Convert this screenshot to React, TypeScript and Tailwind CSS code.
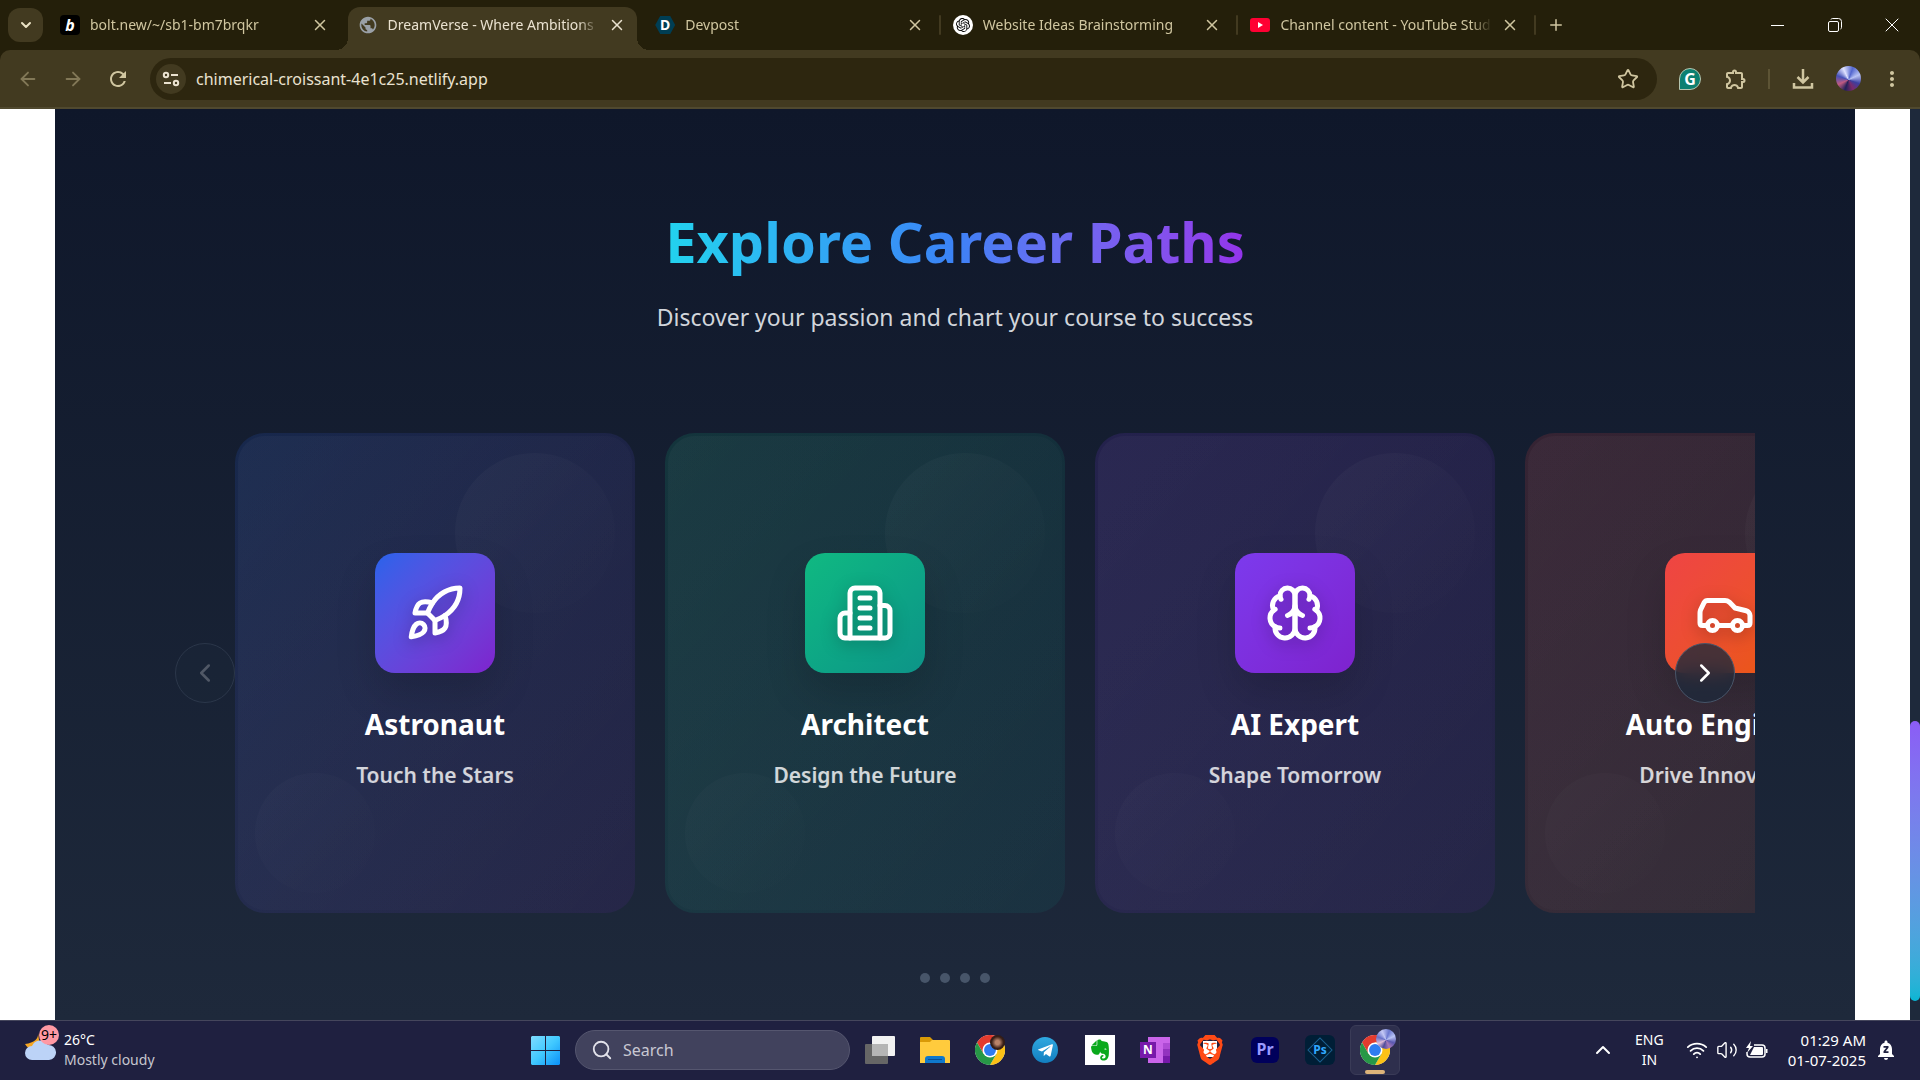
import React, { useState } from 'react';
import {
  ArrowLeft,
  ArrowRight,
  Car,
  ChevronDown,
  ChevronLeft,
  ChevronRight,
  ChevronUp,
  Plus,
  Rocket,
  Search,
  Star,
  Volume2,
  Wifi,
  X,
} from 'lucide-react';
import { FaTelegramPlane, FaEvernote } from 'react-icons/fa';
import { SiOpenai, SiBrave } from 'react-icons/si';
import { MdNotificationsPaused, MdMoreVert, MdOutlineExtension, MdRefresh, MdPublic } from 'react-icons/md';

type IconProps = { className?: string };

function BuildingIcon({ className }: IconProps) {
  return (
    <svg viewBox="0 0 24 24" fill="none" stroke="currentColor" strokeWidth="2" strokeLinecap="round" strokeLinejoin="round" className={className}>
      <path d="M6 22V4a2 2 0 0 1 2-2h8a2 2 0 0 1 2 2v18Z" />
      <path d="M6 12H4a2 2 0 0 0-2 2v6a2 2 0 0 0 2 2h2" />
      <path d="M18 9h2a2 2 0 0 1 2 2v9a2 2 0 0 1-2 2h-2" />
      <path d="M10 6h4M10 10h4M10 14h4M10 18h4" />
    </svg>
  );
}

function BrainIcon({ className }: IconProps) {
  return (
    <svg viewBox="0 0 24 24" fill="none" stroke="currentColor" strokeWidth="2" strokeLinecap="round" strokeLinejoin="round" className={className}>
      <path d="M12 5a3 3 0 1 0-5.997.125 4 4 0 0 0-2.526 5.77 4 4 0 0 0 .556 6.588A4 4 0 1 0 12 18Z" />
      <path d="M12 5a3 3 0 1 1 5.997.125 4 4 0 0 1 2.526 5.77 4 4 0 0 1-.556 6.588A4 4 0 1 1 12 18Z" />
      <path d="M15 13a4.5 4.5 0 0 1-3-4 4.5 4.5 0 0 1-3 4" />
      <path d="M17.599 6.5a3 3 0 0 0 .399-1.375M6.003 5.125A3 3 0 0 0 6.401 6.5" />
      <path d="M3.477 10.896a4 4 0 0 1 .585-.396M19.938 10.5a4 4 0 0 1 .585.396" />
      <path d="M6 18a4 4 0 0 1-1.967-.516M19.967 17.484A4 4 0 0 1 18 18" />
    </svg>
  );
}

function ChromeLogo() {
  return (
    <svg viewBox="0 0 48 48" className="w-[30px] h-[30px]">
      <circle cx="24" cy="24" r="24" fill="#fff" />
      <path d="M24 12h20.8A24 24 0 0 0 3.2 12l10.4 18z" fill="#e33b2e" />
      <path d="M34.4 30 24 48a24 24 0 0 0 20.8-36H24z" fill="#fbc116" />
      <path d="M13.6 30 3.2 12A24 24 0 0 0 24 48l10.4-18z" fill="#279847" />
      <circle cx="24" cy="24" r="12" fill="#fff" />
      <circle cx="24" cy="24" r="9.5" fill="#2f7cf0" />
    </svg>
  );
}

const tabs = [
  {
    title: 'bolt.new/~/sb1-bm7brqkr',
    icon: <span className="w-5 h-5 rounded bg-black text-white text-base leading-5 font-bold italic text-center">b</span>,
  },
  {
    title: 'DreamVerse - Where Ambitions',
    active: true,
    icon: <MdPublic className="w-5 h-5 text-[#9aa0a6]" />,
  },
  {
    title: 'Devpost',
    icon: (
      <span className="w-5 h-5 bg-[#003e54] text-white text-sm leading-5 font-bold text-center [clip-path:polygon(25%_5%,75%_5%,100%_50%,75%_95%,25%_95%,0_50%)]">
        D
      </span>
    ),
  },
  {
    title: 'Website Ideas Brainstorming',
    icon: (
      <span className="w-5 h-5 rounded-full bg-white flex items-center justify-center">
        <SiOpenai className="w-[14px] h-[14px] text-black" />
      </span>
    ),
  },
  {
    title: 'Channel content - YouTube Stud',
    icon: (
      <svg viewBox="0 0 20 14" className="w-5 h-[14px]">
        <rect width="20" height="14" rx="3" fill="#ff0033" />
        <path d="M8 4v6l5-3z" fill="#fff" />
      </svg>
    ),
  },
];

const careers = [
  {
    icon: Rocket,
    title: 'Astronaut',
    description: 'Touch the Stars',
    card: 'from-[#2563eb]/15 to-[#7e22ce]/10',
    tile: 'from-[#2563eb] to-[#7e22ce]',
  },
  {
    icon: BuildingIcon,
    title: 'Architect',
    description: 'Design the Future',
    card: 'from-[#10b981]/15 to-[#0d9488]/10',
    tile: 'from-[#10b981] to-[#0d9488]',
  },
  {
    icon: BrainIcon,
    title: 'AI Expert',
    description: 'Shape Tomorrow',
    card: 'from-[#7c3aed]/15 to-[#7e22ce]/10',
    tile: 'from-[#7c3aed] to-[#7e22ce]',
  },
  {
    icon: Car,
    title: 'Auto Engineer',
    description: 'Drive Innovation',
    card: 'from-[#ef4444]/15 to-[#ea580c]/10',
    tile: 'from-[#ef4444] to-[#ea580c]',
  },
];

function TabStrip() {
  return (
    <div className="h-[50px] flex items-stretch bg-[#241f0a] text-[#d0c6a0]">
      <div className="w-[50px] shrink-0 pl-2 pt-2">
        <button aria-label="Search tabs" className="w-[35px] h-[34px] rounded-xl bg-[#423a20] flex items-center justify-center text-[#eae2c4]">
          <ChevronDown className="w-4 h-4" strokeWidth={3} />
        </button>
      </div>

      <div className="flex-1 max-w-[1488px] flex pt-[7px]">
        {tabs.map((tab, idx) => (
          <div key={tab.title} className="relative flex-1 min-w-0 pr-2">
            <div
              className={
                tab.active
                  ? 'relative h-full flex items-center pl-[10px] pr-[10px] pb-[7px] rounded-t-xl bg-[#423a20] text-[#eae2d0]'
                  : 'h-full flex items-center pl-[10px] pr-[10px] pb-[7px]'
              }
            >
              {tab.active && (
                <>
                  <span className="absolute -left-3 bottom-0 w-3 h-3 bg-[radial-gradient(circle_at_0_0,transparent_12px,#423a20_12px)]" />
                  <span className="absolute -right-3 bottom-0 w-3 h-3 bg-[radial-gradient(circle_at_100%_0,transparent_12px,#423a20_12px)]" />
                </>
              )}
              <button className="flex-1 min-w-0 flex items-center gap-[10px] text-left">
                <span className="shrink-0 flex">{tab.icon}</span>
                <span className="flex-1 whitespace-nowrap overflow-hidden text-sm leading-5 [mask-image:linear-gradient(to_right,#000_90%,transparent)]">
                  {tab.title}
                </span>
              </button>
              <button aria-label="Close tab" className="ml-2 w-5 h-5 flex items-center justify-center">
                <X className="w-[18px] h-[18px]" strokeWidth={2} />
              </button>
            </div>
            {idx >= 2 && <span className="absolute right-[2px] top-2 w-[2px] h-5 rounded bg-[#423a20]" />}
          </div>
        ))}
      </div>

      <button aria-label="New tab" className="w-9 flex items-center justify-center">
        <Plus className="w-[18px] h-[18px]" />
      </button>

      <div className="ml-auto flex text-white">
        <button aria-label="Minimize" className="w-[57px] flex items-center justify-center">
          <span className="w-[13px] h-px bg-white" />
        </button>
        <button aria-label="Restore" className="w-[57px] flex items-center justify-center">
          <svg viewBox="0 0 14 14" fill="none" stroke="currentColor" className="w-[14px] h-[14px]">
            <rect x="0.5" y="3.5" width="10" height="10" rx="1.5" />
            <path d="M3 1.5q.3-1 1.5-1h6a3 3 0 0 1 3 3v6q0 1.2-1 1.5" />
          </svg>
        </button>
        <button aria-label="Close" className="w-[57px] flex items-center justify-center">
          <X className="w-6 h-6" strokeWidth={1} />
        </button>
      </div>
    </div>
  );
}

function Toolbar() {
  return (
    <div className="bg-[#241f0a]">
      <div className="h-[59px] flex items-center rounded-t-[10px] bg-[#423a20] border-b-2 border-[#50492f] text-[#d0c6a0]">
        <div className="flex pl-[5px]">
          <button aria-label="Back" className="w-[45px] h-9 flex items-center justify-center text-[#827857]">
            <ArrowLeft className="w-[22px] h-[22px]" />
          </button>
          <button aria-label="Forward" className="w-[45px] h-9 flex items-center justify-center text-[#827857]">
            <ArrowRight className="w-[22px] h-[22px]" />
          </button>
          <button aria-label="Reload" className="w-[45px] h-9 flex items-center justify-center">
            <MdRefresh className="w-6 h-6" />
          </button>
        </div>

        <div className="flex-1 h-[42px] ml-[10px] pl-[6px] pr-[18px] flex items-center rounded-full bg-[#2d260f]">
          <button aria-label="Site information" className="w-[30px] h-[30px] rounded-full bg-[#423a20] flex items-center justify-center text-[#eae2d0]">
            <svg viewBox="0 0 18 18" fill="none" stroke="currentColor" strokeWidth="2" className="w-[18px] h-[18px]">
              <circle cx="4" cy="5" r="2.2" />
              <path d="M9 5h7M2 13h7" />
              <circle cx="14" cy="13" r="2.2" />
            </svg>
          </button>
          <input
            aria-label="Address"
            defaultValue="chimerical-croissant-4e1c25.netlify.app"
            className="flex-1 min-w-0 ml-[10px] bg-transparent outline-none text-base leading-6 text-[#eae2d0]"
          />
          <button aria-label="Bookmark this tab">
            <Star className="w-[22px] h-[22px]" />
          </button>
        </div>

        <div className="flex items-center pl-[22px] pr-4">
          <button aria-label="Grammarly" className="w-[22px] h-[22px] rounded-full rounded-bl-none bg-[#0c8071] border border-[#b5c5b0] text-white text-base leading-5 font-bold">
            G
          </button>
          <button aria-label="Extensions" className="ml-[23px] w-6 h-6">
            <MdOutlineExtension className="w-6 h-6" />
          </button>
          <span className="ml-5 w-[2px] h-5 bg-[#5d5435]" />
          <button aria-label="Downloads" className="ml-[22px] w-[22px] h-[22px]">
            <svg viewBox="0 0 22 22" fill="none" stroke="currentColor" strokeWidth="2.5" className="w-[22px] h-[22px]">
              <path d="M11 1v13M5.5 9l5.5 5.5L16.500 9M2 15v4.500h18V15" />
            </svg>
          </button>
          <button
            aria-label="Profile"
            className="ml-[22px] w-[25px] h-[25px] rounded-full bg-[conic-gradient(from_20deg_at_50%_55%,#5266cf,#b9c4f5,#3b3fa0,#7b2a6b,#20205a,#c05a80,#4450b8,#dfe2ff,#5266cf)]"
          />
          <button aria-label="Menu" className="ml-[19px] w-6 h-6">
            <MdMoreVert className="w-6 h-6" />
          </button>
        </div>
      </div>
    </div>
  );
}

function CareerPaths() {
  const [selected, setSelected] = useState(0);

  return (
    <main className="flex-1 min-w-0 mx-[55px] bg-gradient-to-b from-[#0f172a] to-[#1e293b]">
      {/* HEADING */}
      <div className="pt-[94px] text-center">
        <h1 className="inline-block bg-gradient-to-r from-[#22d3ee] via-[#3b82f6] to-[#9333ea] bg-clip-text text-transparent font-bold text-[56px] leading-[76px]">
          Explore Career Paths
        </h1>
        <p className="mt-5 text-[23px] leading-9 text-[#d1d5db]">Discover your passion and chart your course to success</p>
      </div>

      {/* CAROUSEL */}
      <div className="relative max-w-[1600px] mx-auto mt-[98px] pl-20">
        <div className="flex gap-[30px] overflow-hidden">
          {careers.map((career) => {
            const Icon = career.icon;
            return (
              <article key={career.title} className={`relative shrink-0 w-[400px] h-[480px] p-[3px] rounded-[30px] bg-gradient-to-br ${career.card}`}>
                <span className="absolute top-5 right-5 w-40 h-40 rounded-full bg-gradient-to-br from-white/3 to-transparent" />
                <span className="absolute bottom-5 left-5 w-[120px] h-[120px] rounded-full bg-gradient-to-br from-white/2 to-transparent" />
                <div className="relative h-full rounded-[27px] bg-gradient-to-br from-white/3 to-transparent flex flex-col items-center pt-[117px] text-center">
                  <div className={`w-[120px] h-[120px] rounded-[20px] bg-gradient-to-br ${career.tile} flex items-center justify-center text-white shadow-[0_20px_40px_rgba(0,0,0,0.15)]`}>
                    <Icon className="w-[60px] h-[60px] drop-shadow-[0_4px_8px_rgba(0,0,0,0.25)]" />
                  </div>
                  <h2 className="mt-[30px] text-[28px] leading-[42px] font-bold text-white">{career.title}</h2>
                  <p className="mt-[14px] text-[21px] leading-8 font-semibold text-white/80">{career.description}</p>
                </div>
              </article>
            );
          })}
        </div>

        <button
          aria-label="Previous"
          disabled={selected === 0}
          onClick={() => setSelected(selected - 1)}
          className="absolute left-5 top-[210px] w-[60px] h-[60px] rounded-full bg-[#1e293b]/80 border border-[#475569] text-white flex items-center justify-center disabled:opacity-40"
        >
          <ChevronLeft className="w-[30px] h-[30px] opacity-60" />
        </button>
        <button
          aria-label="Next"
          onClick={() => setSelected(Math.min(selected + 1, careers.length - 1))}
          className="absolute right-5 top-[210px] w-[60px] h-[60px] rounded-full bg-[#1e293b]/80 border border-[#475569] text-white flex items-center justify-center backdrop-blur-[10px]"
        >
          <ChevronRight className="w-[30px] h-[30px]" />
        </button>
      </div>

      {/* DOTS */}
      <div className="mt-[60px] flex justify-center gap-[10px]">
        {careers.map((career, idx) => (
          <button key={career.title} aria-label={career.title} onClick={() => setSelected(idx)} className="w-[10px] h-[10px] rounded-full bg-[#475569]" />
        ))}
      </div>
    </main>
  );
}

function Taskbar() {
  return (
    <footer className="h-[60px] pb-px grid grid-cols-[1fr_auto_1fr] items-center bg-[#1f2040] border-t border-[#45465c] text-white text-sm leading-5">
      <button className="justify-self-start flex items-center pl-6 text-left">
        <span className="relative w-10 h-[50px]">
          <svg viewBox="0 0 32 40" className="w-8 h-10">
            <path d="M14 8q1 9-13 11 5 9 15 3z" fill="#f5a623" />
            <path d="M8 35a7 7 0 0 1 0-14 9 9 0 0 1 16-1 7.500 7.500 0 0 1 1 15z" fill="#bcd3f7" />
          </svg>
          <span className="absolute left-[15px] top-0 w-5 h-5 rounded-full bg-[#ff99a4] text-black text-sm leading-5 text-center">9+</span>
        </span>
        <span>
          26°C
          <br />
          <span className="text-[#c6c6cf]">Mostly cloudy</span>
        </span>
      </button>

      <div className="flex items-center gap-[5px]">
        <button aria-label="Start" className="w-[50px] h-[50px] flex items-center justify-center">
          <svg viewBox="0 0 29 29" className="w-[29px] h-[29px]">
            <defs>
              <linearGradient id="win" x1="0" y1="0" x2="1" y2="1">
                <stop offset="0" stopColor="#7fdcff" />
                <stop offset="0.5" stopColor="#41c9ff" />
                <stop offset="1" stopColor="#0a90f8" />
              </linearGradient>
            </defs>
            <path d="M1 0h13v14H0V1zM15 0h13l1 1v13H15zM0 15h14v14H1l-1-1zM15 15h14v13l-1 1H15z" fill="url(#win)" />
          </svg>
        </button>
        <label className="w-[275px] h-10 px-[15px] rounded-full bg-[#41425d] border border-[#55566f] flex items-center gap-[10px]">
          <Search className="w-[22px] h-[22px] shrink-0 text-[#e2e2ea]" />
          <input aria-label="Search" placeholder="Search" className="w-full min-w-0 bg-transparent outline-none text-base leading-6 placeholder:text-[#c8c8d2]" />
        </label>

        <button aria-label="Task view" className="w-[50px] h-[50px] flex items-center justify-center">
          <svg viewBox="0 0 30 28" className="w-[30px] h-7">
            <rect y="8" width="23" height="20" rx="1" fill="#666" />
            <rect x="7" width="23" height="20" rx="1" fill="#f2f2f2" />
            <path d="M7 8h16v12H7z" fill="#b5b5b5" />
          </svg>
        </button>
        <button aria-label="File Explorer" className="w-[50px] h-[50px] flex items-center justify-center">
          <svg viewBox="0 0 30 27" className="w-[30px] h-[27px]">
            <path d="M0 1q0-1 1-1h9l3 3v4H0z" fill="#d99a07" />
            <path d="M0 5h10l2-2h17q1 0 1 1v22H0z" fill="#ffcb3d" />
            <path d="M5 26v-4q0-3 3-3h14q3 0 3 3v4z" fill="#0f78cc" />
            <path d="M8 22.500h14" stroke="#0a4f94" />
          </svg>
        </button>
        <button aria-label="Chrome" className="relative w-[50px] h-[50px] flex items-center justify-center">
          <ChromeLogo />
          <span className="absolute right-[10px] top-[10px] w-[15px] h-[15px] rounded-full bg-[radial-gradient(circle,#b98368_20%,#3a2018_55%,#17100e)]" />
        </button>
        <button aria-label="Telegram" className="w-[50px] h-[50px] flex items-center justify-center">
          <span className="w-[26px] h-[26px] rounded-full bg-gradient-to-b from-[#2fa8e0] to-[#127fc0] flex items-center justify-center">
            <FaTelegramPlane className="w-[17px] h-[17px] text-white" />
          </span>
        </button>
        <button aria-label="Evernote" className="w-[50px] h-[50px] flex items-center justify-center">
          <span className="w-[30px] h-[30px] bg-white flex items-center justify-center">
            <FaEvernote className="w-6 h-6 text-[#0aa91c]" />
          </span>
        </button>
        <button aria-label="OneNote" className="w-[50px] h-[50px] flex items-center justify-center">
          <span className="relative w-[30px] h-[26px] pl-2 flex">
            <svg viewBox="0 0 22 26" className="w-[22px] h-[26px]">
              <path d="M0 0h22v26H0z" fill="#ca64ea" />
              <path d="M15 6h7v6h-7z" fill="#ae4bd5" />
              <path d="M15 12h7v7h-7z" fill="#9332bf" />
              <path d="M15 19h7v7h-7z" fill="#7719aa" />
            </svg>
            <span className="absolute left-0 top-[5px] w-4 h-4 bg-[#7719aa] text-xs leading-4 font-bold text-center">N</span>
          </span>
        </button>
        <button aria-label="Brave" className="w-[50px] h-[50px] flex items-center justify-center">
          <span className="relative w-[30px] h-[30px] flex items-center justify-center">
            <span className="absolute left-2 top-[6px] w-[14px] h-4 bg-white" />
            <SiBrave className="relative w-[30px] h-[30px] text-[#ff4a16]" />
          </span>
        </button>
        <button aria-label="Premiere Pro" className="w-[50px] h-[50px] flex items-center justify-center">
          <span className="w-7 h-[26px] rounded-md bg-[#00005b] text-[#9999ff] text-base leading-6 font-bold text-center">Pr</span>
        </button>
        <button aria-label="Photoshop" className="w-[50px] h-[50px] flex items-center justify-center">
          <span className="relative w-[30px] h-[30px] rounded-md bg-[#001e36] text-[#31a8ff] text-xs leading-[30px] font-bold text-center">
            <span className="absolute left-[6px] top-[6px] w-[18px] h-[18px] rotate-45 border border-[#1b608f]" />
            Ps
          </span>
        </button>
        <button aria-label="Chrome, active window" className="relative w-[50px] h-[50px] rounded-md bg-[#2e2f4d] border border-[#3a3b57] flex items-center justify-center">
          <ChromeLogo />
          <span className="absolute right-[3px] top-[3px] w-5 h-5 rounded-full bg-[conic-gradient(from_20deg_at_50%_55%,#6b78d0,#b9c4f5,#5a58b0,#a87ab8,#504c9c,#e0bcd8,#6670c8,#c4c8f5,#6b78d0)]" />
          <span className="absolute left-[14px] bottom-0 w-5 h-1 rounded-full bg-[#ddb47a]" />
        </button>
      </div>

      <div className="justify-self-end flex items-center pr-[22px]">
        <button aria-label="Show hidden icons">
          <ChevronUp className="w-6 h-6" />
        </button>
        <button className="ml-5 text-center">
          ENG
          <br />
          IN
        </button>
        <button aria-label="Network, volume and battery" className="ml-[22px] flex items-center gap-2">
          <Wifi className="w-[22px] h-[22px]" strokeWidth={2} />
          <Volume2 className="w-[22px] h-[22px]" strokeWidth={1.5} />
          <svg viewBox="0 0 22 18" fill="none" stroke="currentColor" strokeWidth="1.5" className="w-[22px] h-[18px]">
            <path d="M8 4h8a3 3 0 0 1 3 3v6a3 3 0 0 1-3 3H4a3 3 0 0 1-3-3v-2" />
            <path d="M8 6h8a1 1 0 0 1 1 1v6a1 1 0 0 1-1 1H4z" fill="currentColor" stroke="none" />
            <path d="M5 0 0 7h3l-2 5 6-7H4zM20 8h1.500v4H20z" fill="currentColor" stroke="none" />
          </svg>
        </button>
        <button className="ml-5 text-right text-[15px]">
          01:29 AM
          <br />
          01-07-2025
        </button>
        <button aria-label="Notifications" className="ml-2">
          <MdNotificationsPaused className="w-6 h-6" />
        </button>
      </div>
    </footer>
  );
}

export default function App() {
  return (
    <div className="h-screen flex flex-col overflow-hidden bg-white font-['Noto_Sans','Open_Sans',sans-serif]">
      <header>
        <TabStrip />
        <Toolbar />
      </header>
      <div className="flex-1 min-h-0 flex overflow-hidden">
        <CareerPaths />
        <div className="w-[10px] flex flex-col bg-[#1e293b]">
          <div className="flex-1" />
          <div className="h-[280px] mb-[19px] rounded-full bg-gradient-to-b from-[#8b5cf6] to-[#06b6d4]" />
        </div>
      </div>
      <Taskbar />
    </div>
  );
}
